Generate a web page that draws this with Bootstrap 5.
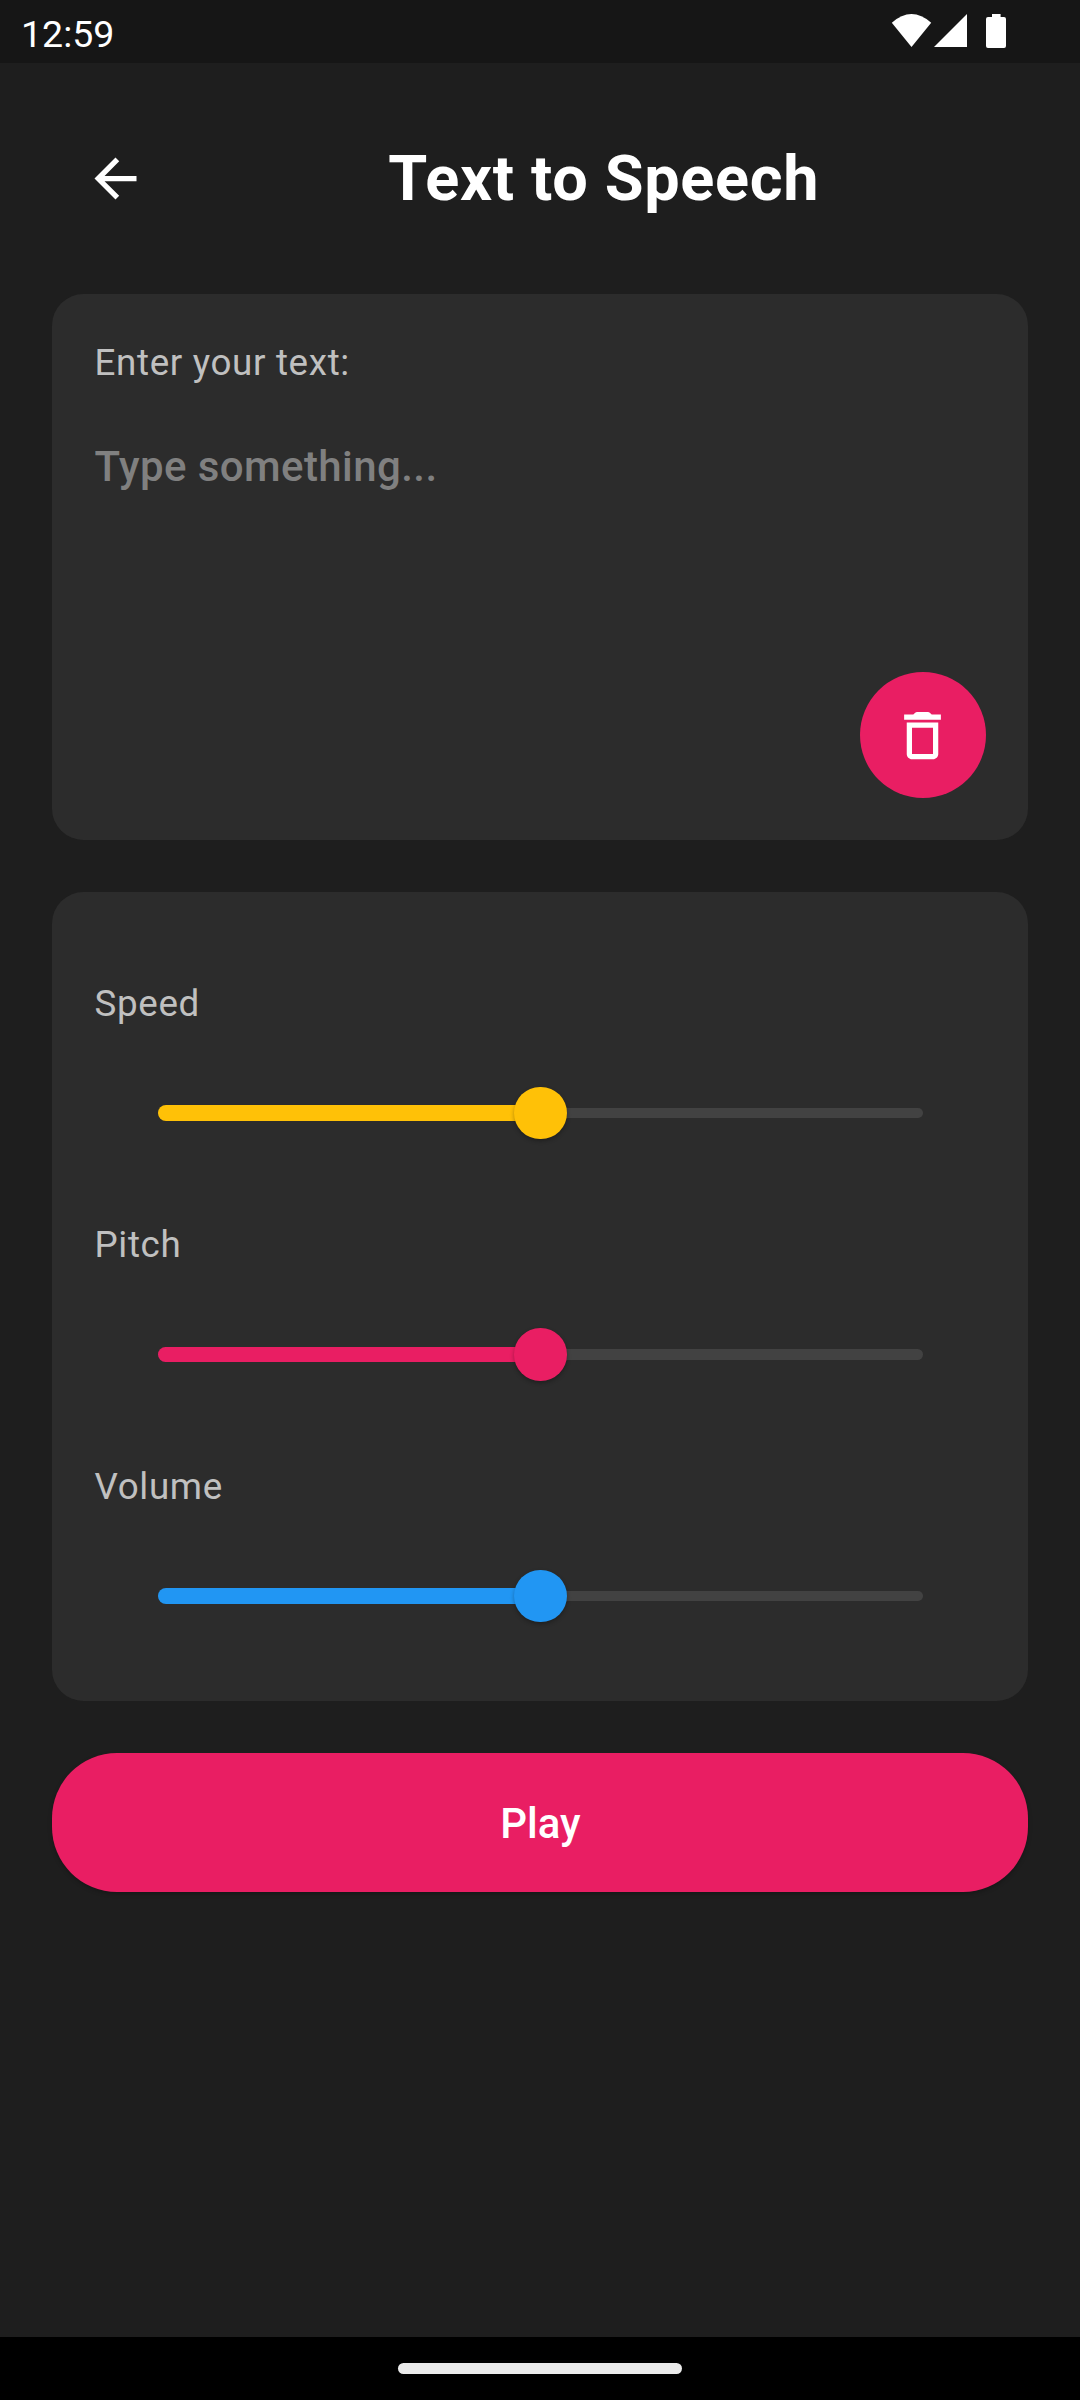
<!DOCTYPE html>
<html lang="en" data-bs-theme="dark">
<head>
<meta charset="utf-8">
<meta name="viewport" content="width=device-width, initial-scale=1">
<title>Text to Speech</title>
<link href="https://cdn.jsdelivr.net/npm/bootstrap@5.3.0/dist/css/bootstrap.min.css" rel="stylesheet">
<style>
body{background:#1e1e1e;color:#fff;font-family:Roboto,sans-serif;height:2400px;overflow:hidden}
svg{display:block;fill:#fff}
.statusbar{height:63px;background:#161616;padding:0 74px 0 21px}
.clock{font-size:37.5px;line-height:44px;margin-top:4px}
.topbar{height:231px;padding:0 52.5px 0 84px}
.screen-title{font-size:63px;font-weight:700;line-height:74px;letter-spacing:.68px;padding-left:33px}
.content-area{padding:0 52px;gap:52px}
.panel{background:#2c2c2c;border:0;border-radius:31.5px}
.text-panel{height:546px;padding:47px 42px 42px 42.5px}
.caption-text{font-size:36.75px;line-height:44px;letter-spacing:.66px;color:#c0c0c0}
.entry{font-size:42px;font-weight:500;line-height:50px;letter-spacing:.42px;color:#fff;resize:none;height:230px;margin-top:57px;outline:0;overflow:hidden}
.entry::placeholder{color:#808080;opacity:1}
.fab{width:126px;height:126px;background:#e91e63;right:42.5px;bottom:42px}
.slider-panel{height:809px;padding:89.5px 42.5px 0}
.slider-block{height:241.5px}
.slider-row{height:52.5px;margin:61.3px 63px 0}
.rail{height:10.5px;border-radius:6px;background:#424242;top:21px}
.fill{height:15.75px;border-radius:8px;top:18.4px;background:var(--tone)}
.knob{width:52.5px;height:52.5px;margin-left:-26px;background:var(--tone);box-shadow:0 2px 4px rgba(0,0,0,.3)}
.tone-speed{--tone:#ffc107}.tone-pitch{--tone:#e91e63}.tone-volume{--tone:#2196f3}
.play-btn{height:139px;padding:2px 0 0 1px;border:0;border-radius:65px;background:#e91e63;color:#fff;font-size:42px;font-weight:500;line-height:50px;box-shadow:0 2px 4px rgba(0,0,0,.25)}
.navpill{height:63px;background:#000}
.navpill span{width:284px;height:11px;border-radius:6px;background:#ebebeb}
</style>
<script src="https://cdn.jsdelivr.net/npm/bootstrap@5.3.0/dist/js/bootstrap.bundle.min.js"></script>
</head>
<body class="d-flex flex-column">
<header class="statusbar d-flex justify-content-between align-items-center">
  <span class="clock">12:59</span>
  <svg width="115" height="35" viewBox="891 14 115 35">
    <path d="M891.8 22.8Q911.5 5.4 931.2 22.8L911.5 47Z"/>
    <path d="M934 47H967V14Z"/>
    <path d="M992 14h8.6v3h3.4a2 2 0 0 1 2 2v27a2 2 0 0 1-2 2h-16a2 2 0 0 1-2-2V19a2 2 0 0 1 2-2h4z"/>
  </svg>
</header>
<div class="topbar d-flex align-items-center">
  <a href="#" aria-label="Back"><svg width="63" height="63" viewBox="0 0 24 24"><path d="M20 11H7.83l5.59-5.59L12 4l-8 8 8 8 1.41-1.41L7.83 13H20z"/></svg></a>
  <h1 class="screen-title flex-grow-1 text-center m-0">Text to Speech</h1>
</div>
<main class="content-area d-flex flex-column flex-grow-1">
  <section class="card panel text-panel">
    <label class="caption-text" for="entry">Enter your text:</label>
    <textarea id="entry" class="entry w-100 bg-transparent border-0 p-0" placeholder="Type something..."></textarea>
    <button type="button" aria-label="Clear" class="btn fab rounded-circle border-0 p-0 position-absolute d-flex align-items-center justify-content-center">
      <svg width="63" height="63" viewBox="0 0 24 24"><path fill-rule="evenodd" d="M6 19c0 1.1.9 2 2 2h8c1.1 0 2-.9 2-2V7H6v12zM8 9h8v10H8V9zM15.5 4l-.71-.71c-.18-.18-.44-.29-.7-.29H9.91c-.26 0-.52.11-.7.29L8.5 4H5v2h14V4h-3.5z"/></svg>
    </button>
  </section>
  <section class="card panel slider-panel">
    <div class="slider-block flex-shrink-0 tone-speed">
      <div class="caption-text">Speed</div>
      <div class="slider-row position-relative"><div class="rail position-absolute w-100"></div><div class="fill position-absolute" style="width:50%"></div><div class="knob position-absolute rounded-circle" style="left:50%"></div></div>
    </div>
    <div class="slider-block flex-shrink-0 tone-pitch">
      <div class="caption-text">Pitch</div>
      <div class="slider-row position-relative"><div class="rail position-absolute w-100"></div><div class="fill position-absolute" style="width:50%"></div><div class="knob position-absolute rounded-circle" style="left:50%"></div></div>
    </div>
    <div class="slider-block flex-shrink-0 tone-volume">
      <div class="caption-text">Volume</div>
      <div class="slider-row position-relative"><div class="rail position-absolute w-100"></div><div class="fill position-absolute" style="width:50%"></div><div class="knob position-absolute rounded-circle" style="left:50%"></div></div>
    </div>
  </section>
  <button type="button" class="btn play-btn w-100">Play</button>
</main>
<footer class="navpill d-flex align-items-center justify-content-center"><span></span></footer>
</body>
</html>
